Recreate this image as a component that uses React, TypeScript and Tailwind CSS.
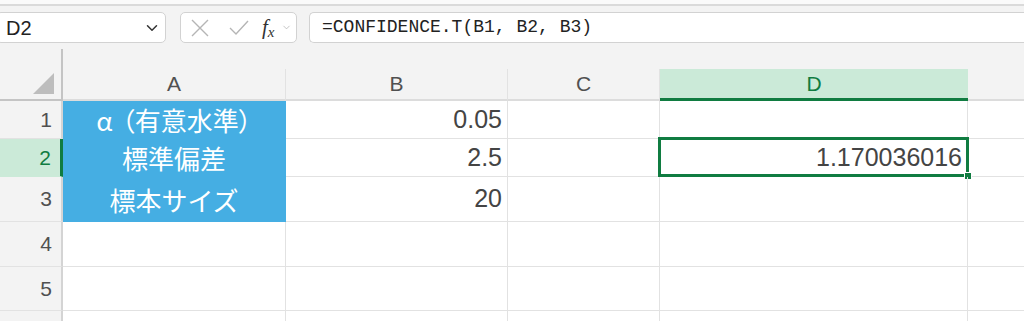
import { ChevronDown } from 'lucide-react';

const cols = [
  { key: 'A', w: 'w-[223px]' },
  { key: 'B', w: 'w-[222px]' },
  { key: 'C', w: 'w-[152px]' },
  { key: 'D', w: 'w-[308px]' },
];

const rows = [
  { n: 1, h: 'h-[38px]', b: '0.05', d: '' },
  { n: 2, h: 'h-[38px]', b: '2.5', d: '1.170036016' },
  { n: 3, h: 'h-[45px]', b: '20', d: '' },
  { n: 4, h: 'h-[45px]', b: '', d: '' },
  { n: 5, h: 'h-[44px]', b: '', d: '' },
  { n: 6, h: 'h-[44px]', b: '', d: '' },
];

const font = { fontFamily: '"Liberation Sans", "Noto Sans CJK JP", sans-serif' };

// 列Aの見出しセル（青背景）
const labelFor = (n: number) => {
  if (n === 1)
    return (
      <span style={{ fontFeatureSettings: '"palt"' }}>
        <span className="mr-[9px]">α</span>（有意水準）
      </span>
    );
  if (n === 2) return '標準偏差';
  if (n === 3) return '標本サイズ';
  return '';
};

export default function App() {
  return (
    <div className="w-[1024px] h-[321px] overflow-hidden bg-white text-[#333]" style={font}>
      {/* Formula bar */}
      <div className="h-[49px] bg-[#f3f3f3]">
        <div className="h-[6px] bg-[#fafafa] border-b-2 border-[#dadada]" />
        <div className="flex items-center pt-[6px] h-[37px]">
          <div className="ml-[-4px] w-[170px] h-[31px] bg-white border border-[#d2d2d2] rounded-[5px] flex items-center justify-between pl-[9px] pr-[4px]">
            <span className="text-[20px] text-[#222]">D2</span>
            <ChevronDown size={18} strokeWidth={2} className="text-[#333]" />
          </div>
          <div className="ml-[14px] w-[117px] h-[31px] bg-white border border-[#d2d2d2] rounded-[5px] flex items-center pl-[9px]">
            <svg width="20" height="20" viewBox="0 0 20 20" className="mr-[19px]">
              <path d="M2 2 L18 18 M18 2 L2 18" stroke="#b5b5b5" strokeWidth="1.4" fill="none" />
            </svg>
            <svg width="20" height="20" viewBox="0 0 20 20" className="mr-[13px]">
              <path d="M1 10 L7 16 L19 3" stroke="#b5b5b5" strokeWidth="1.4" fill="none" />
            </svg>
            <span className="text-[21px] italic text-[#333] leading-none" style={{ fontFamily: '"Liberation Serif", serif' }}>
              f<span className="text-[15px] relative top-[3px]">x</span>
            </span>
            <ChevronDown size={11} strokeWidth={1.5} className="ml-[6px] text-[#aaa]" />
          </div>
          <div className="ml-[12px] flex-1 h-[31px] bg-white border border-[#d2d2d2] rounded-l-[5px] border-r-0 flex items-center pl-[12px]">
            <span className="text-[18px] text-[#222]" style={{ fontFamily: '"Liberation Mono", monospace' }}>
              =CONFIDENCE.T(B1, B2, B3)
            </span>
          </div>
        </div>
      </div>

      {/* Column headers */}
      <div className="flex h-[52px] bg-[#f3f3f3]">
        <div className="w-[63px] shrink-0 border-r-2 border-b-2 border-[#c4c4c4] flex items-end justify-end pr-[7px] pb-[5px]">
          <svg width="21" height="21" viewBox="0 0 21 21">
            <polygon points="0,21 21,21 21,0" fill="#bdbdbd" />
          </svg>
        </div>
        {cols.map((c) => (
          <div key={c.key} className={`${c.w} shrink-0 flex flex-col`}>
            <div className="h-[20px]" />
            {c.key === 'D' ? (
              <div className="h-[32px] bg-[#cbead8] border-b-[3px] border-[#107c41] flex items-center justify-center text-[21px] text-[#107c41]">
                {c.key}
              </div>
            ) : (
              <div className="h-[32px] border-r border-[#e2e2e2] border-b-2 border-b-[#dcdcdc] flex items-center justify-center text-[21px] text-[#505050]">
                {c.key}
              </div>
            )}
          </div>
        ))}
        <div className="flex-1 flex flex-col">
          <div className="h-[20px]" />
          <div className="h-[32px] border-b-2 border-[#dcdcdc]" />
        </div>
      </div>

      {/* Rows */}
      {rows.map((r) => {
        const blue = r.n <= 3;
        const sel = r.n === 2;
        return (
          <div key={r.n} className={`flex ${r.h}`}>
            <div
              className={`w-[63px] shrink-0 border-b flex items-center justify-end pr-[9px] text-[21px] ${
                sel
                  ? 'bg-[#cbead8] text-[#107c41] border-b-[#cbead8] border-r-[3px] border-r-[#107c41]'
                  : 'bg-[#f3f3f3] text-[#505050] border-b-[#e2e2e2] border-r-2 border-r-[#d4d4d4]'
              }`}
            >
              {r.n <= 5 ? r.n : ''}
            </div>
            <div
              className={`w-[223px] shrink-0 border-r border-b flex items-center justify-center text-[26px] ${
                blue ? 'bg-[#45aee3] border-[#45aee3] text-white' : 'border-[#e2e2e2]'
              }`}
              style={{ fontFamily: '"Noto Sans CJK JP", sans-serif' }}
            >
              {labelFor(r.n)}
            </div>
            <div className="w-[222px] shrink-0 border-r border-b border-[#e2e2e2] flex items-center justify-end pr-[5px] text-[25px] text-[#444]">
              {r.b}
            </div>
            <div className="w-[152px] shrink-0 border-r border-b border-[#e2e2e2]" />
            <div className="w-[308px] shrink-0 border-r border-b border-[#e2e2e2] relative flex items-center justify-end pr-[5px] text-[25px] text-[#444]">
              {r.d}
              {sel && (
                <>
                  <div className="absolute left-[-2px] top-[-2px] right-[-2px] bottom-[-1px] border-[3px] border-[#107c41]" />
                  <div className="absolute right-[-5px] bottom-[-4px] w-[8px] h-[8px] bg-[#107c41] border border-white" />
                </>
              )}
            </div>
            <div className="flex-1 border-b border-[#e2e2e2]" />
          </div>
        );
      })}
    </div>
  );
}
